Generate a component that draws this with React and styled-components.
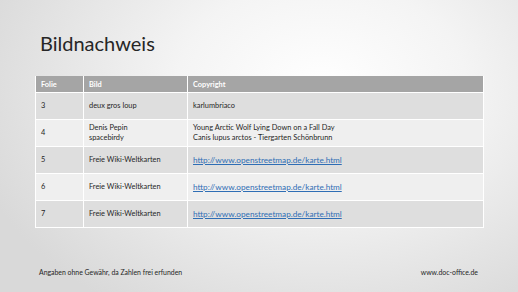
import styled, { createGlobalStyle } from "styled-components";

const GlobalStyle = createGlobalStyle`
  html, body {
    margin: 0;
    padding: 0;
  }
  body {
    font-family: Lato, "Liberation Sans", sans-serif;
  }
`;

const Slide = styled.div`
  width: 518px;
  height: 292px;
  box-sizing: border-box;
  display: flex;
  flex-direction: column;
  padding: 28px 36px 0 35px;
  background: radial-gradient(ellipse 70% 90% at 62% 30%, #ffffff 0%, #f4f4f4 40%, #d9d9d9 100%);
  overflow: hidden;
`;

const Title = styled.h1`
  margin: 0 0 0 5px;
  font-family: Lato, "Liberation Sans", sans-serif;
  font-weight: 400;
  font-size: 20px;
  line-height: 30px;
  color: #262626;
`;

const Table = styled.table`
  margin-top: 18px;
  width: 448px;
  border-collapse: collapse;
  table-layout: fixed;
  font-size: 7.4px;
  color: #262626;
`;

const Col = styled.col`
  width: ${(p) => p.$w}px;
`;

const HeadCell = styled.th`
  background: #a5a5a5;
  color: #ffffff;
  font-weight: 700;
  text-align: left;
  height: 16px;
  padding: 0 5px;
  border: 1px solid #ffffff;
  border-top: none;
`;

const Row = styled.tr`
  background: ${(p) => (p.$odd ? "#dedede" : "#efefef")};
`;

const Cell = styled.td`
  height: 26px;
  padding: 0 5px;
  border: 1px solid #ffffff;
  vertical-align: middle;
  line-height: 10px;
`;

const Link = styled.a`
  color: #2f6eb5;
  text-decoration: underline;
  font-size: 8.2px;
`;

const Footer = styled.div`
  margin-top: auto;
  height: 24px;
  display: flex;
  justify-content: space-between;
  align-items: flex-start;
  padding: 0 40px 0 4px;
  font-size: 6.9px;
  color: #262626;
  margin-right: -36px;
`;

const rows = [
  { folie: "3", bild: ["deux gros loup"], copy: ["karlumbriaco"] },
  {
    folie: "4",
    bild: ["Denis Pepin", "spacebirdy"],
    copy: ["Young Arctic Wolf Lying Down on a Fall Day", "Canis lupus arctos - Tiergarten Schönbrunn"],
  },
  { folie: "5", bild: ["Freie Wiki-Weltkarten"], link: "http://www.openstreetmap.de/karte.html" },
  { folie: "6", bild: ["Freie Wiki-Weltkarten"], link: "http://www.openstreetmap.de/karte.html" },
  { folie: "7", bild: ["Freie Wiki-Weltkarten"], link: "http://www.openstreetmap.de/karte.html" },
];

function Lines({ items }) {
  return items.map((t, i) => (
    <div key={i}>{t}</div>
  ));
}

export default function App() {
  return (
    <Slide>
      <GlobalStyle />
      <Title>Bildnachweis</Title>
      <Table>
        <colgroup>
          <Col $w={48} />
          <Col $w={104} />
          <Col $w={296} />
        </colgroup>
        <thead>
          <tr>
            <HeadCell>Folie</HeadCell>
            <HeadCell>Bild</HeadCell>
            <HeadCell>Copyright</HeadCell>
          </tr>
        </thead>
        <tbody>
          {rows.map((r, i) => (
            <Row key={r.folie} $odd={i % 2 === 0}>
              <Cell>{r.folie}</Cell>
              <Cell>
                <Lines items={r.bild} />
              </Cell>
              <Cell>
                {r.link ? <Link href={r.link}>{r.link}</Link> : <Lines items={r.copy} />}
              </Cell>
            </Row>
          ))}
        </tbody>
      </Table>
      <Footer>
        <span>Angaben ohne Gewähr, da Zahlen frei erfunden</span>
        <span>www.doc-office.de</span>
      </Footer>
    </Slide>
  );
}
